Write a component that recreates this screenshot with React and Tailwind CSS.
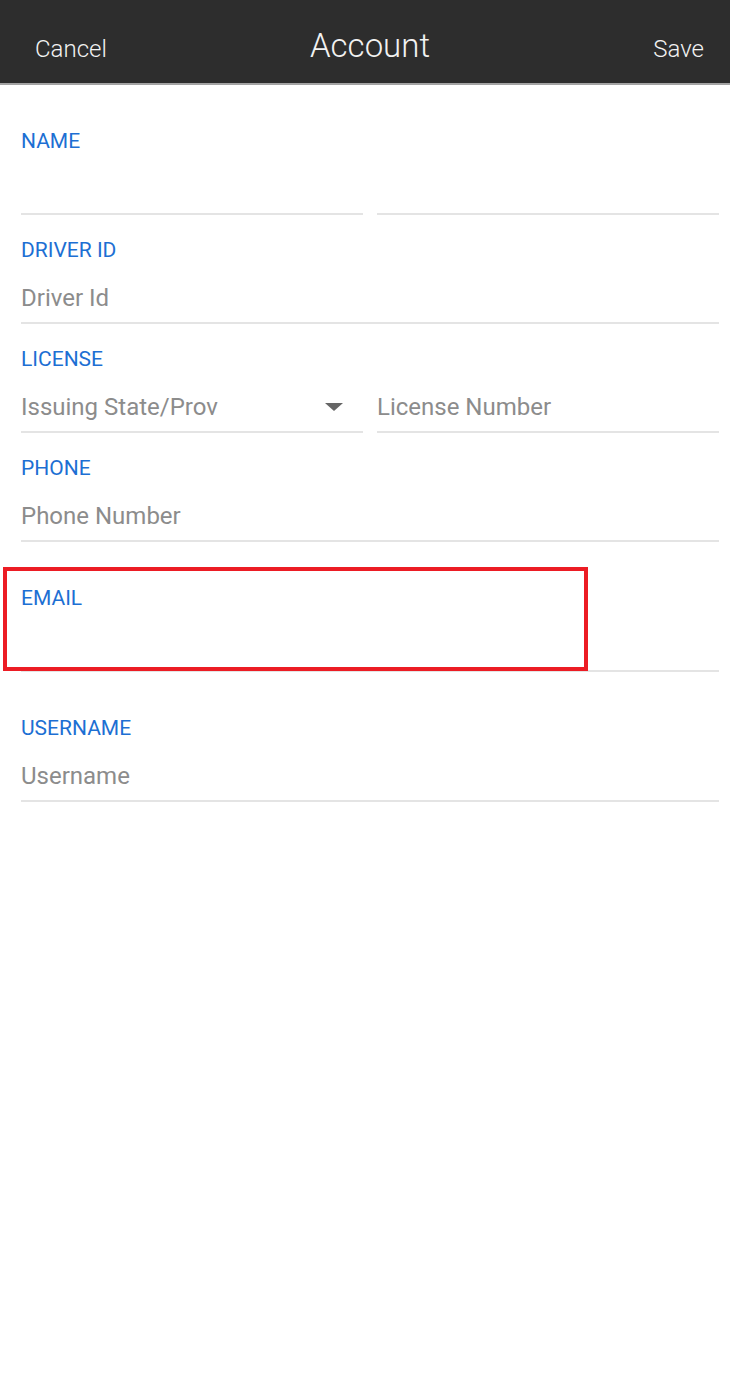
import React from "react";

const font = { fontFamily: "Roboto, 'Noto Sans', sans-serif" };

function Label({ children }) {
  return (
    <div className="h-[24px] text-[21px] leading-[24px] text-[#1d6fd3]">{children}</div>
  );
}

function Input({ placeholder, children }) {
  return (
    <div className="flex-1 border-b-2 border-[#e4e4e4] pt-[22px] pb-[10px]">
      <div className="relative h-[28px] text-[24px] leading-[28px] text-[#8c8c8c]">
        {placeholder}
        {children}
      </div>
    </div>
  );
}

function Field({ label, mt = "mt-[23px]", children }) {
  return (
    <div className={mt}>
      <Label>{label}</Label>
      <div className="flex gap-[14px]">{children}</div>
    </div>
  );
}

export default function App() {
  return (
    <div className="relative min-h-[1377px] w-[730px] bg-white" style={font}>
      <header className="flex h-[85px] items-center justify-between border-b-2 border-[#a3a3a3] bg-[#2d2d2d] px-[26px] pt-[14px] text-[#f2f2f2]">
        <span className="w-[90px] pl-[9px] text-[24px] font-light">Cancel</span>
        <span className="-mt-[5px] ml-[10px] text-[33px] font-light">Account</span>
        <span className="w-[90px] text-right text-[24px] font-light">Save</span>
      </header>

      <div className="pl-[21px] pr-[11px]">
        <Field label="NAME" mt="mt-[44px]">
          <Input placeholder="" />
          <Input placeholder="" />
        </Field>
        <Field label="DRIVER ID">
          <Input placeholder="Driver Id" />
        </Field>
        <Field label="LICENSE">
          <Input placeholder="Issuing State/Prov">
            <svg
              className="absolute right-[20px] top-[10px]"
              width="18"
              height="8"
              viewBox="0 0 18 8"
            >
              <path d="M0 0 L18 0 L9 8 Z" fill="#666666" />
            </svg>
          </Input>
          <Input placeholder="License Number" />
        </Field>
        <Field label="PHONE">
          <Input placeholder="Phone Number" />
        </Field>
        <Field label="EMAIL" mt="mt-[44px]">
          <Input placeholder="" />
        </Field>
        <Field label="USERNAME" mt="mt-[44px]">
          <Input placeholder="Username" />
        </Field>
      </div>

      <div className="absolute left-[3px] top-[567px] h-[104px] w-[585px] border-4 border-[#ec1c24]" />
    </div>
  );
}
